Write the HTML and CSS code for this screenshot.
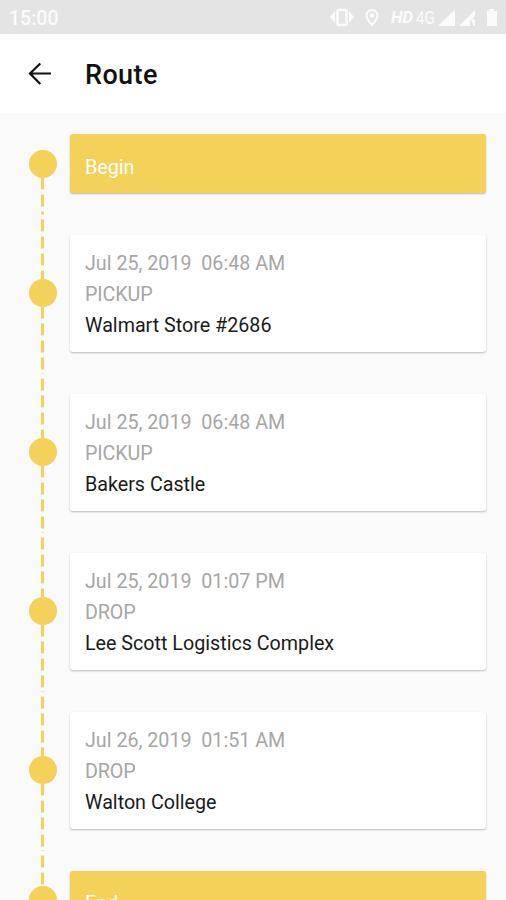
FILE: index.html
```html
<!DOCTYPE html>
<html lang="en">
<head>
<meta charset="utf-8">
<title>Route</title>
<link rel="stylesheet" href="styles.css">
</head>
<body>
<div class="screen">
  <div class="status">
    <span class="clock">15:00</span>
    <svg class="status-icons" width="176" height="34" viewBox="0 0 176 34" fill="#fbfbfb">
      <path d="M0 17l5-6v12zM24 17l-5-6v12z"/>
      <rect x="7.5" y="10" width="9" height="15" rx="1" fill="none" stroke="#fbfbfb" stroke-width="2.500"/>
      <path fill-rule="evenodd" d="M42 9c-3.600 0-6.500 2.900-6.500 6.500C35.500 20 42 26.500 42 26.500S48.500 20 48.500 15.500C48.500 11.900 45.600 9 42 9zm0 2a4.500 4.500 0 0 1 4.500 4.500c0 2.300-2.500 5.700-4.500 8-2-2.300-4.500-5.700-4.500-8A4.500 4.500 0 0 1 42 11z"/>
      <circle cx="42" cy="15.500" r="2.200"/>
      <text class="hd" x="61" y="23" textLength="22" lengthAdjust="spacingAndGlyphs">HD</text>
      <text class="net" x="86" y="24" textLength="19" lengthAdjust="spacingAndGlyphs">4G</text>
      <path d="M108 26L125 9.500V26z"/>
      <path d="M129 26L145 10v6l-5 5v5zM141.500 20l1.500-1.500 2 2v5.500h-1.500z"/>
      <path d="M159 9h5v2h3v15h-10V11h2z"/>
    </svg>
  </div>
  <header class="appbar">
    <svg class="back" width="24" height="24" viewBox="0 0 24 24" fill="none" stroke="#111" stroke-width="2.200"><path d="M23 11.500H2M12.300 1.500L2 11.500l10.300 10.500"/></svg>
    <h1 class="title">Route</h1>
  </header>
  <main class="timeline">
    <section class="row edge">
      <div class="rail"><i class="line blank"></i><i class="dot"></i><i class="line lower"></i></div>
      <div class="card filled"><span>Begin</span></div>
    </section>
    <section class="row">
      <div class="rail"><i class="line upper"></i><i class="dot"></i><i class="line lower"></i></div>
      <div class="card"><p class="time">Jul 25, 2019&nbsp; 06:48 AM</p><p class="kind">PICKUP</p><p class="place">Walmart Store #2686</p></div>
    </section>
    <section class="row">
      <div class="rail"><i class="line upper"></i><i class="dot"></i><i class="line lower"></i></div>
      <div class="card"><p class="time">Jul 25, 2019&nbsp; 06:48 AM</p><p class="kind">PICKUP</p><p class="place">Bakers Castle</p></div>
    </section>
    <section class="row">
      <div class="rail"><i class="line upper"></i><i class="dot"></i><i class="line lower"></i></div>
      <div class="card"><p class="time">Jul 25, 2019&nbsp; 01:07 PM</p><p class="kind">DROP</p><p class="place">Lee Scott Logistics Complex</p></div>
    </section>
    <section class="row">
      <div class="rail"><i class="line upper"></i><i class="dot"></i><i class="line lower"></i></div>
      <div class="card"><p class="time">Jul 26, 2019&nbsp; 01:51 AM</p><p class="kind">DROP</p><p class="place">Walton College</p></div>
    </section>
    <section class="row edge">
      <div class="rail"><i class="line upper"></i><i class="dot"></i><i class="line blank"></i></div>
      <div class="card filled"><span>End</span></div>
    </section>
  </main>
</div>
</body>
</html>
```
FILE: styles.css
```css
* { box-sizing: border-box; }
body { margin: 0; font-family: Roboto, "Liberation Sans", sans-serif; background: #fafafa; }
.screen { display: flex; flex-direction: column; height: 900px; overflow: hidden; }
.status { flex: none; height: 34px; display: flex; align-items: center; justify-content: space-between; background: #e4e4e4; padding-left: 9px; }
.clock { font-size: 19.500px; font-weight: 500; color: #fbfbfb; padding-top: 2px; }
.hd { font-size: 16px; font-weight: 700; font-style: italic; }
.net { font-size: 18px; }
.appbar { flex: none; height: 79.300px; display: flex; align-items: center; gap: 33px; padding: 0 28px; background: #fff; }
.title { margin: 3px 0 0; font-size: 27px; line-height: 32px; font-weight: 500; letter-spacing: .4px; color: #111; }
.timeline { flex: none; }
.row { display: grid; grid-template-columns: 29px 416px; column-gap: 13px; padding-left: 28px; height: 159px; align-items: center; }
.row.edge { height: 100.500px; }
.rail { height: 100%; display: flex; flex-direction: column; align-items: center; }
.line { flex: 1; width: 3.500px; background-image: linear-gradient(#f4d158 11.700px, transparent 11.700px); background-size: 100% 17px; background-repeat: repeat-y; }
.upper { background-position: 0 5.500px; }
.lower { background-position: 0 -0.500px; }
.blank { background: none; }
.dot { flex: none; width: 28px; height: 28px; border-radius: 50%; background: #f4d158; }
.card { height: 117px; padding: 13.500px 15px 11px; background: #fff; border-radius: 3px; box-shadow: 0 1px 2px rgba(0,0,0,.26); font-size: 19.700px; line-height: 31px; }
.card p { margin: 0; white-space: nowrap; }
.time, .kind { color: #a6a6a6; }
.kind { letter-spacing: -.1px; }
.place { color: #1a1a1a; }
.filled { height: 58.500px; padding-top: 17.700px; background: #f4d158; color: #fff; }
```
